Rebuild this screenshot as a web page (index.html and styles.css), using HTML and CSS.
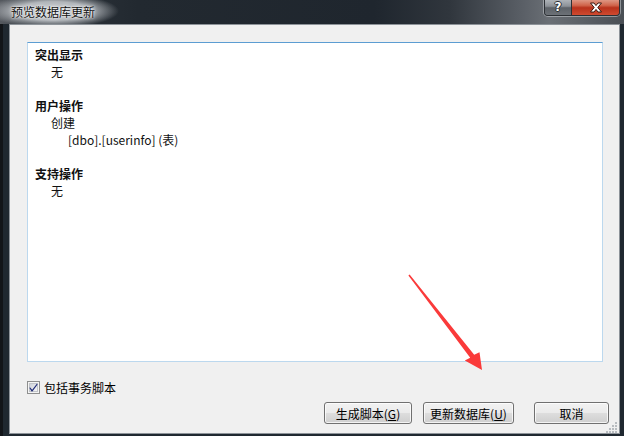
FILE: index.html
```html
<!DOCTYPE html>
<html lang="zh-CN">
<head>
<meta charset="utf-8">
<title>预览数据库更新</title>
<link rel="stylesheet" href="styles.css">
</head>
<body>
<div class="window">
  <div class="titlebar">
    <span class="title">预览数据库更新</span>
    <div class="caption-buttons">
      <div class="cbtn help"><span>?</span></div>
      <div class="cbtn close">
        <svg width="14" height="11" viewBox="0 0 14 11"><path d="M1.5 1 L5 1 L7 3.6 L9 1 L12.5 1 L8.8 5.5 L12.5 10 L9 10 L7 7.4 L5 10 L1.5 10 L5.2 5.5 Z" fill="#fff" stroke="#3b1a12" stroke-width="1"/></svg>
      </div>
    </div>
  </div>
  <div class="frame">
    <div class="client">
      <div class="preview">
        <div class="line head">突出显示</div>
        <div class="line l1">无</div>
        <div class="line"></div>
        <div class="line head">用户操作</div>
        <div class="line l1">创建</div>
        <div class="line l2">[dbo].[userinfo] (表)</div>
        <div class="line"></div>
        <div class="line head">支持操作</div>
        <div class="line l1">无</div>
      </div>
      <div class="check-row">
        <span class="checkbox">
          <svg width="13" height="13" viewBox="0 0 13 13">
            <defs>
              <linearGradient id="cbg" x1="0" y1="0" x2="1" y2="1">
                <stop offset="0" stop-color="#cdd1d8"/>
                <stop offset="1" stop-color="#f7f7f8"/>
              </linearGradient>
            </defs>
            <rect x="0.5" y="0.5" width="12" height="12" fill="#f4f4f4" stroke="#8e8f8f"/>
            <rect x="2.5" y="2.5" width="8" height="8" fill="url(#cbg)" stroke="#c2c5ca"/>
            <path d="M3 6.2 L5.2 8.8 L10 2.6 L10.6 3.4 L5.4 10.6 L4.6 10.6 L2.4 7 Z" fill="#1f2a78"/>
          </svg>
        </span>
        <span class="check-label">包括事务脚本</span>
      </div>
      <div class="buttons">
        <button class="btn b1">生成脚本(<u>G</u>)</button>
        <button class="btn b2">更新数据库(<u>U</u>)</button>
        <button class="btn b3">取消</button>
      </div>
      <svg class="grip" width="12" height="12" viewBox="0 0 12 12">
        <g fill="#b8bcc0">
          <rect x="9" y="1" width="2" height="2"/>
          <rect x="6" y="4" width="2" height="2"/><rect x="9" y="4" width="2" height="2"/>
          <rect x="3" y="7" width="2" height="2"/><rect x="6" y="7" width="2" height="2"/><rect x="9" y="7" width="2" height="2"/>
          <rect x="0" y="10" width="2" height="2"/><rect x="3" y="10" width="2" height="2"/><rect x="6" y="10" width="2" height="2"/><rect x="9" y="10" width="2" height="2"/>
        </g>
      </svg>
    </div>
  </div>
  <svg class="arrow" width="624" height="436" viewBox="0 0 624 436">
    <polygon points="408.4,275.4 409.6,274.6 474.2,354.8 479.5,352.2 482,370 464.8,360.6 470.2,357.8" fill="#fa3a3a"/>
  </svg>
</div>
</body>
</html>
```
FILE: styles.css
```css
* { box-sizing: border-box; }
html, body { margin: 0; padding: 0; }
body {
  width: 624px;
  height: 436px;
  overflow: hidden;
  background: #1f262e;
  font-family: "Noto Sans CJK SC", "Microsoft YaHei", sans-serif;
  font-size: 12px;
  color: #000;
}
.window {
  position: relative;
  width: 624px;
  height: 436px;
  display: flex;
  flex-direction: column;
  background: linear-gradient(90deg, #121519 0, #121519 3px, #1f2830 3px, #1f2830 100%);
}
.titlebar {
  height: 24px;
  display: flex;
  align-items: flex-start;
  background:
    radial-gradient(ellipse 66px 17px at 53px 11px, rgba(210,214,218,0.95) 0%, rgba(200,204,208,0.85) 55%, rgba(190,194,198,0) 100%),
    linear-gradient(90deg, #55595f 0%, #30363d 5%, #222930 22%, #1f262e 60%, #30363d 72%, #5b6067 84%, #6a6f75 88%, #575c62 95%, #4a4f55 100%);
}
.title {
  padding: 3px 14px 4px 11px;
  line-height: 17px;
  font-size: 12px;
  color: #111;
  text-shadow: 0 0 4px #fff, 0 0 2px #fff;
}
.caption-buttons {
  margin-left: auto;
  margin-right: 4px;
  margin-top: -1px;
  display: flex;
  height: 17px;
  border: 1px solid #2c3035;
  border-top: none;
  border-radius: 0 0 4px 4px;
  box-shadow: 0 0 0 1px rgba(200,204,208,0.55);
  overflow: hidden;
}
.cbtn {
  display: flex;
  align-items: center;
  justify-content: center;
  height: 100%;
}
.help {
  width: 27px;
  border-right: 1px solid #2c3035;
  background: linear-gradient(#b4b9be 0%, #8c9197 45%, #5d6268 55%, #6c7177 100%);
}
.help span {
  color: #fff;
  font-family: "DejaVu Sans", sans-serif;
  font-weight: bold;
  font-size: 12px;
  line-height: 12px;
  text-shadow: 1px 0 0 #2a2e33, -1px 0 0 #2a2e33, 0 1px 0 #2a2e33, 0 -1px 0 #2a2e33;
}
.close {
  width: 47px;
  background: linear-gradient(#e0a08e 0%, #d0644b 40%, #b8321c 55%, #cf4a30 100%);
}
.frame {
  flex: 1;
  display: flex;
  padding: 0 4px 2px 9px;
}
.client {
  position: relative;
  flex: 1;
  display: flex;
  flex-direction: column;
  background: #f0f0f0;
  border: 1px solid #8d9399;
  padding: 17px 16px 9px 17px;
}
.preview {
  height: 320px;
  background: #fff;
  border: 1px solid #bcd8ee;
  border-top-color: #5c9dd2;
  padding: 3px 0 0 7px;
}
.line {
  height: 17px;
  line-height: 17px;
  white-space: nowrap;
  color: #111;
}
.head { font-weight: bold; }
.l1 { padding-left: 16px; }
.l2 { padding-left: 33px; }
.check-row {
  margin-top: 19px;
  height: 13px;
  display: flex;
  align-items: center;
}
.checkbox {
  display: block;
  width: 13px;
  height: 13px;
}
.checkbox svg { display: block; }
.check-label {
  margin-left: 4px;
  line-height: 13px;
  color: #000;
}
.buttons {
  margin-top: 8px;
  margin-right: -6px;
  display: flex;
  justify-content: flex-end;
}
.btn {
  height: 22px;
  padding: 0;
  border: 1px solid #707070;
  border-radius: 3px;
  background: linear-gradient(#f2f2f2 0%, #ebebeb 48%, #dddddd 52%, #cfcfcf 100%);
  box-shadow: inset 0 0 0 1px rgba(255,255,255,0.75);
  font-family: "Noto Sans CJK SC", "Microsoft YaHei", sans-serif;
  font-size: 12px;
  line-height: 19px;
  color: #000;
  text-align: center;
}
.btn u { text-decoration-thickness: 1px; text-underline-offset: 1px; }
.b1 { width: 88px; margin-right: 11px; }
.b2 { width: 91px; margin-right: 20px; }
.b3 { width: 75px; }
.grip {
  position: absolute;
  right: 1px;
  bottom: 0;
}
.arrow {
  position: absolute;
  left: 0;
  top: 0;
  pointer-events: none;
}
```
